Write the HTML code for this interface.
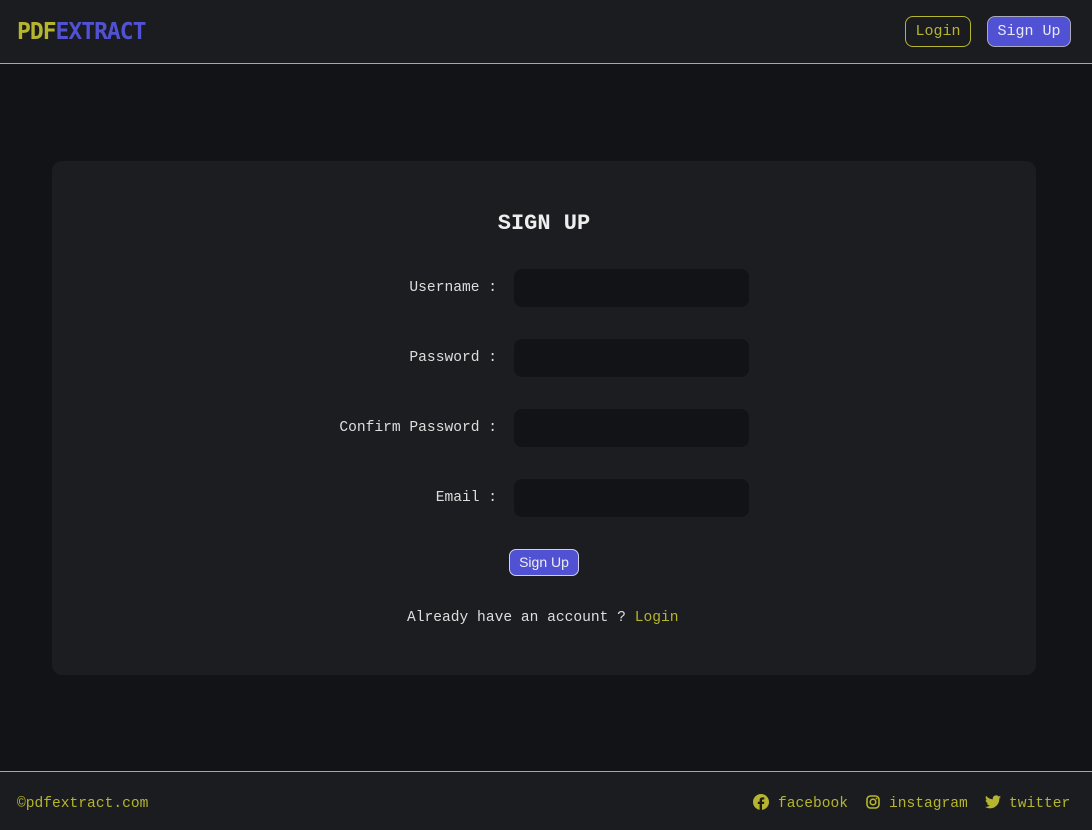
<!DOCTYPE html>
<html><head><meta charset="utf-8"><style>
*{box-sizing:border-box;margin:0;padding:0}
body{width:1092px;height:830px;background:#121316;font-family:"Liberation Mono",monospace;color:#e6e6e6;position:relative;overflow:hidden}
.hdr{position:absolute;left:0;top:0;width:1092px;height:63px;background:#1b1c1f}
.line{position:absolute;left:0;width:1092px;height:1px;background:#b5b52f}
.logo{position:absolute;left:17px;top:19px;font-size:23px;font-weight:bold;font-family:"DejaVu Sans Mono","Liberation Mono",monospace;letter-spacing:-1px}
.y{color:#b5b52f}.p{color:#5151d3}
.btn{position:absolute;top:16px;height:31px;border-radius:8px;font-size:15px;line-height:30px;text-align:center}
.b1{left:905px;width:66px;border:1px solid #b5b52f;color:#b5b52f}
.b2{left:987px;width:84px;border:1px solid #aab;background:#5151d3;color:#e8e8f8}
.card{position:absolute;left:52px;top:161px;width:984px;height:514px;background:#1c1d20;border-radius:10px}
h1{position:absolute;left:0;width:1088px;top:211px;text-align:center;font-size:22px;font-weight:bold;color:#eee}
.lab{position:absolute;right:595px;font-size:14.6px;color:#ddd;white-space:pre}
.inp{position:absolute;left:514px;width:235px;height:38px;border-radius:8px;background:#121316}
.sb{position:absolute;left:509px;top:549px;width:70px;height:27px;border-radius:7px;background:#5151d3;border:1px solid #cfcfe8;color:#eee;font-family:"Liberation Sans",sans-serif;font-size:14px;line-height:25px;text-align:center}
.al{position:absolute;left:407px;top:610px;font-size:14.6px;color:#ddd;white-space:pre}
.ftr{position:absolute;left:0;top:772px;width:1092px;height:58px;background:#1b1c1f}
.ft{position:absolute;top:24px;font-size:14.6px;color:#b5b52f;white-space:pre}
svg{position:absolute}
</style></head><body>
<div class="hdr"><div class="logo"><span class="y">PDF</span><span class="p">EXTRACT</span></div>
<div class="btn b1">Login</div><div class="btn b2">Sign Up</div></div>
<div class="line" style="top:63px"></div>
<div class="card"></div>
<h1>SIGN UP</h1>
<div class="lab" style="top:280px">Username :</div><div class="inp" style="top:269px"></div>
<div class="lab" style="top:350px">Password :</div><div class="inp" style="top:339px"></div>
<div class="lab" style="top:420px">Confirm Password :</div><div class="inp" style="top:409px"></div>
<div class="lab" style="top:490px">Email :</div><div class="inp" style="top:479px"></div>
<div class="sb">Sign Up</div>
<div class="al">Already have an account ? <span class="y">Login</span></div>
<div class="line" style="top:771px"></div>
<div class="ftr">
<div class="ft" style="left:17px">©pdfextract.com</div>
<svg style="left:753px;top:22px" width="16" height="16" viewBox="0 0 16 16"><circle cx="8" cy="8" r="8" fill="#b5b52f"/><path d="M9 16V10h2l.3-2.2H9V6.5c0-.6.2-1 1-1h1.3V3.5c-.3 0-1-.1-1.8-.1-1.8 0-2.9 1-2.9 3v1.4H4.8V10h1.8v6z" fill="#1b1c1f"/></svg>
<div class="ft" style="left:778px">facebook</div>
<svg style="left:866px;top:23px" width="14" height="14" viewBox="0 0 14 14"><rect x="1" y="1" width="12" height="12" rx="3.5" fill="none" stroke="#b5b52f" stroke-width="1.6"/><circle cx="7" cy="7" r="2.8" fill="none" stroke="#b5b52f" stroke-width="1.6"/><circle cx="10.5" cy="3.5" r=".9" fill="#b5b52f"/></svg>
<div class="ft" style="left:889px">instagram</div>
<svg style="left:985px;top:23px" width="16" height="14" viewBox="0 0 24 20"><path d="M24 2.4a10 10 0 0 1-2.8.8A5 5 0 0 0 23.3.4a10 10 0 0 1-3.1 1.2A4.9 4.9 0 0 0 11.8 6 14 14 0 0 1 1.7.9a4.9 4.9 0 0 0 1.5 6.6A4.9 4.9 0 0 1 1 6.9 4.9 4.9 0 0 0 4.9 11.8a5 5 0 0 1-2.2.1 4.9 4.9 0 0 0 4.6 3.4A9.9 9.9 0 0 1 0 17.3 14 14 0 0 0 7.5 19.5c9.1 0 14-7.5 14-14v-.6A10 10 0 0 0 24 2.4z" fill="#b5b52f"/></svg>
<div class="ft" style="left:1009px">twitter</div>
</div>
</body></html>
